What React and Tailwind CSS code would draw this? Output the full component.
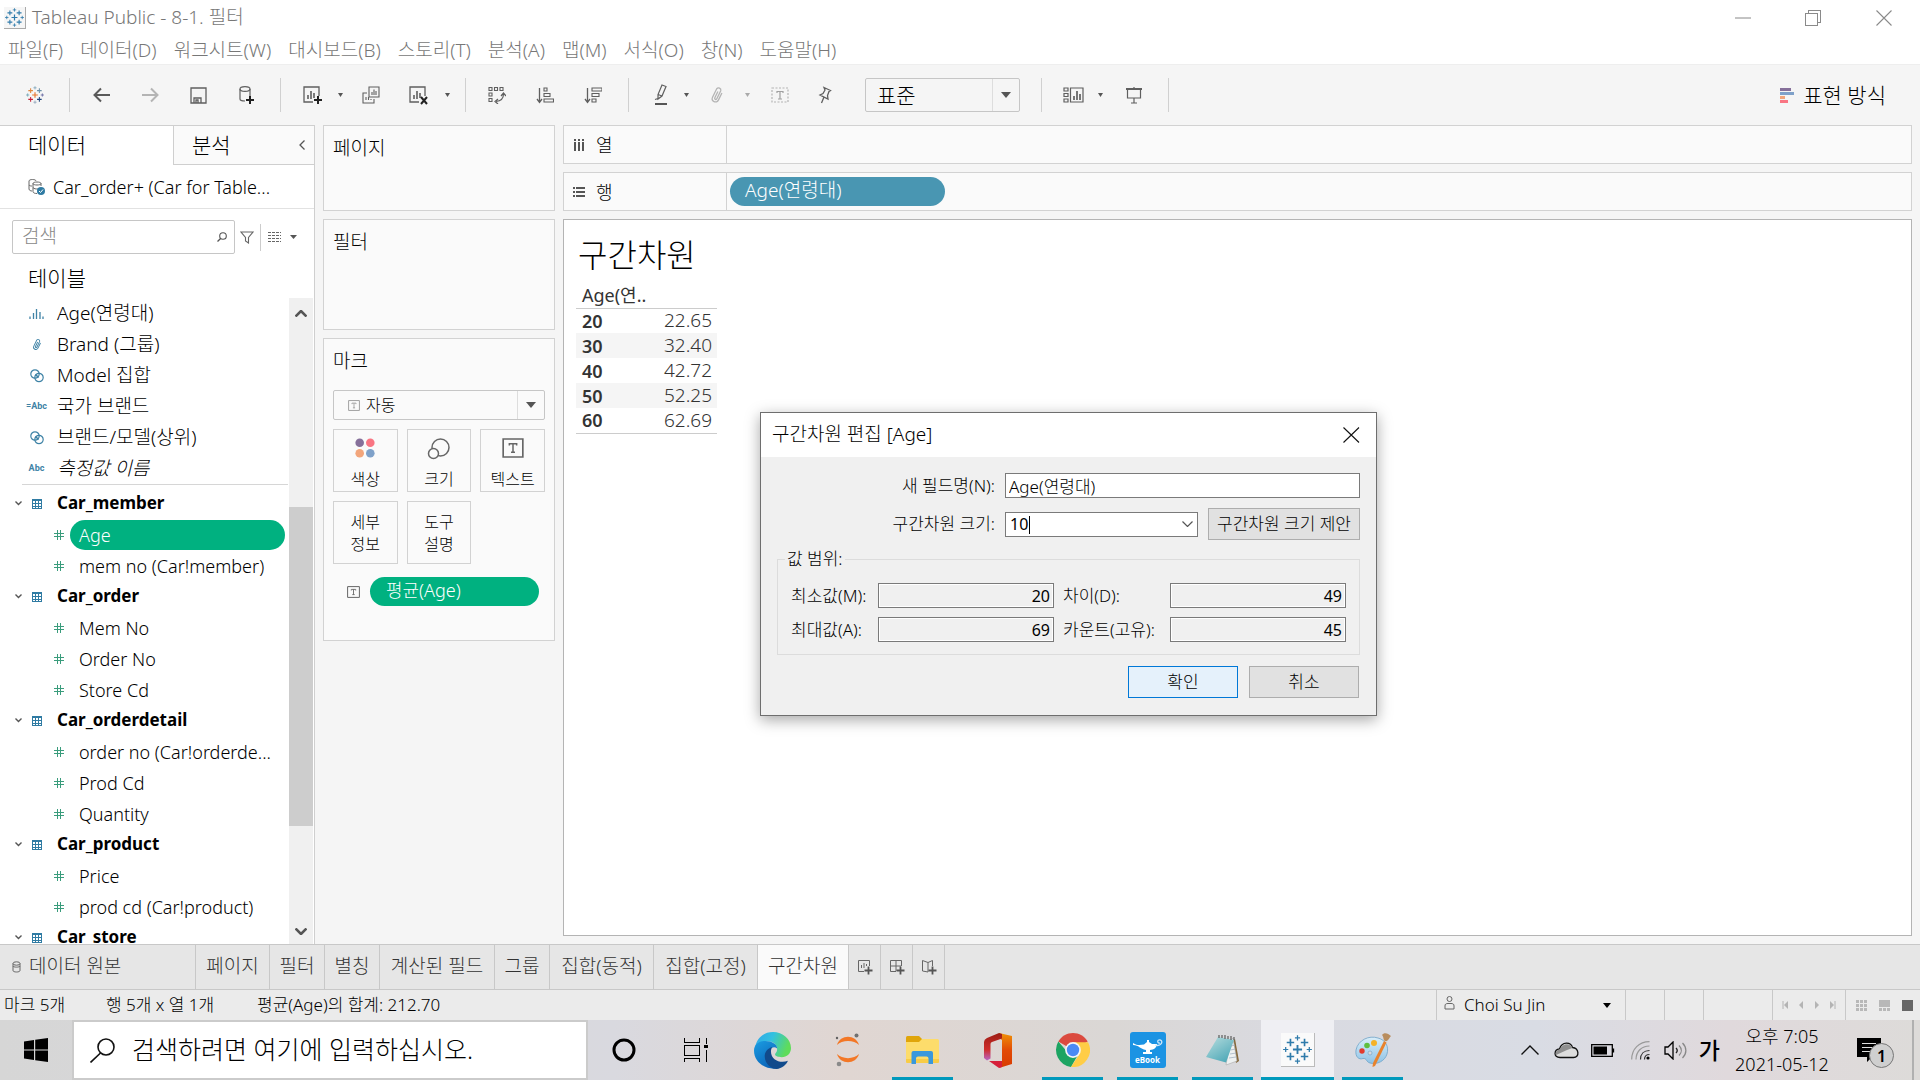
import React from "react";

const SANS = "font-['Noto_Sans','Noto_Sans_CJK_KR',sans-serif]";

/* ---------- small drawing helpers ---------- */

function Svg({ w, h, children, className = "", ...rest }) {
  return (
    <svg width={w} height={h} viewBox={`0 0 ${w} ${h}`} fill="none" className={`shrink-0 ${className}`} aria-hidden="true" {...rest}>
      {children}
    </svg>
  );
}

const cross = (x, y, a) => `M${x - a} ${y}H${x + a}M${x} ${y - a}V${y + a}`;

function TableauMark({ size, colors }) {
  const c = colors || Array(9).fill("#2f7bab");
  const pts = [
    [14, 14, 4.4, 1.8],
    [7.2, 7.2, 3.6, 1.6],
    [20.8, 7.2, 3.6, 1.6],
    [7.2, 20.8, 3.6, 1.6],
    [20.8, 20.8, 3.6, 1.6],
    [14, 2.8, 2.5, 1.2],
    [14, 25.2, 2.5, 1.2],
    [2.6, 14, 2.5, 1.2],
    [25.4, 14, 2.5, 1.2],
  ];
  return (
    <svg width={size} height={size} viewBox="0 0 28 28" aria-hidden="true" className="shrink-0">
      {pts.map(([x, y, a, s], i) => (
        <path key={i} d={cross(x, y, a)} stroke={c[i]} strokeWidth={s} />
      ))}
    </svg>
  );
}

function Caret({ color = "#555", w = 6, h = 4 }) {
  return (
    <Svg w={w} h={h}>
      <path d={`M0 0H${w}L${w / 2} ${h}Z`} fill={color} />
    </Svg>
  );
}

const G = "#5f5f5f";

const Back = () => (
  <Svg w={18} h={16}><path d="M17 8H2M8 1.5L1.5 8L8 14.5" stroke="#5a5a5a" strokeWidth="2" /></Svg>
);
const Forward = () => (
  <Svg w={18} h={16}><path d="M1 8H16M10 1.5L16.5 8L10 14.5" stroke="#b4b4b4" strokeWidth="2" /></Svg>
);
const Save = () => (
  <Svg w={17} h={17}>
    <path d="M1 1H16V16H1ZM4 16V11H11V16M6 16V13H8V16" stroke={G} strokeWidth="1.3" />
  </Svg>
);
const DbPlus = () => (
  <Svg w={18} h={20}>
    <path d="M13 11V4M3 4V14C3 15.5 5 16 8 16" stroke={G} strokeWidth="1.2" />
    <ellipse cx="8" cy="4" rx="5" ry="2.4" stroke={G} strokeWidth="1.2" />
    <path d="M13 11V19M9 15H17" stroke="#222" strokeWidth="2" />
  </Svg>
);
const Sheet = ({ mark }) => (
  <Svg w={21} h={20}>
    <path d="M11 17H2V2H17V11" stroke={G} strokeWidth="1.3" />
    <path d="M6 10V14M9 6V14M12 8V13" stroke={G} strokeWidth="1.6" />
    {mark === "x" ? (
      <path d="M13 12L19 19M19 12L13 19" stroke="#222" strokeWidth="2" />
    ) : (
      <path d="M16 11V19M12 15H20" stroke="#222" strokeWidth="2" />
    )}
  </Svg>
);
const Duplicate = () => (
  <Svg w={18} h={18}>
    <path d="M7 1H17V11H7ZM10 9V6M12 9V3.5M14 9V5" stroke={G} strokeWidth="1.1" />
    <path d="M5 7H1V17H12V13M4 14V11M6.500 14V11M9 14V13" stroke={G} strokeWidth="1.1" />
  </Svg>
);
const Swap = () => (
  <Svg w={18} h={18}>
    <path d="M1 1.500H4V4.500H1ZM6.500 1.500H9.500V4.500H6.500ZM12 1.500H15V4.500H12ZM1 7H4V10H1ZM1 12.500H4V15.500H1Z" stroke={G} strokeWidth="1.1" />
    <path d="M15.500 8C15.500 12 13 15 8 15.500M13 10L15.500 7L18 10M10 13L7 15.500L10 18" stroke={G} strokeWidth="1.2" />
  </Svg>
);
const Sort = ({ desc }) => (
  <Svg w={18} h={17}>
    <path d="M3.500 1V15M1 12L3.500 15.500L6 12" stroke={G} strokeWidth="1.3" />
    {desc ? (
      <path d="M8 1H18V4H8ZM8 6.500H15V9.500H8ZM8 12H12V15H8Z" stroke={G} strokeWidth="1.1" />
    ) : (
      <path d="M8 1H11V4H8ZM8 6.500H14V9.500H8ZM8 12H17.500V15H8Z" stroke={G} strokeWidth="1.1" />
    )}
  </Svg>
);
const Pen = () => (
  <Svg w={14} h={22}>
    <path d="M8 1L12 2.500L8 12L4 15L4 10.500ZM4 10.500L8 12M1 15.500L4 14.500" stroke={G} strokeWidth="1.2" />
    <path d="M1 20H13" stroke="#555" strokeWidth="2" />
  </Svg>
);
const Clip = ({ color = "#b4b4b4", w = 14, h = 18 }) => (
  <svg width={w} height={h} viewBox="0 0 14 18" fill="none" aria-hidden="true" className="shrink-0">
    <path transform="rotate(26 7 9)" d="M10.500 5V13A3.200 3.200 0 0 1 4 13V3.500A2.300 2.300 0 0 1 8.500 3.500V12.500A1.100 1.100 0 0 1 6.300 12.500V5.500" stroke={color} strokeWidth="1.300" />
  </svg>
);
const TextBoxIcon = () => (
  <Svg w={18} h={16}>
    <path d="M1 1H17V15H1Z" stroke="#b4b4b4" strokeWidth="1.2" strokeDasharray="2 1.500" />
    <path d="M6 6V4.500H12V6M9 4.500V12M7 12H11" stroke="#a0a0a0" strokeWidth="1.200" />
  </Svg>
);
const Pin = () => (
  <Svg w={14} h={18}>
    <path d="M6 1.500L12.500 4.500L11 5.500L9.500 9.500L10 13L2 9L5 7.500L7 4ZM6 11L3.500 17" stroke={G} strokeWidth="1.300" />
  </Svg>
);
const CardsIcon = () => (
  <Svg w={21} h={16}>
    <path d="M1 1H5V4H1ZM1 6.500H5V9.500H1ZM1 12H5V15H1ZM7.500 1H20V15H7.500Z" stroke={G} strokeWidth="1.2" />
    <path d="M11 9V13M14 4V13M17 7V13" stroke={G} strokeWidth="1.700" />
  </Svg>
);
const Present = () => (
  <Svg w={18} h={17}>
    <path d="M1 2H17" stroke={G} strokeWidth="2" />
    <path d="M2.500 2V11H15.500V2M9 0V2M9 11V16M6 16H12" stroke={G} strokeWidth="1.200" />
  </Svg>
);

/* field icons */
const BLUE = "#3f83a6";
const BinsIcon = () => (
  <Svg w={15} h={10}><path d="M1 10V7.500M4.500 10V4M7.500 10V0M11 10V3M14 10V7.500" stroke={BLUE} strokeWidth="1.300" /></Svg>
);
const SetIcon = () => (
  <Svg w={14} h={14}><circle cx="5" cy="5" r="4.200" stroke={BLUE} strokeWidth="1.200" /><circle cx="9" cy="8.500" r="4.200" stroke={BLUE} strokeWidth="1.200" /><path d="M5.500 5.500L8.500 8.500" stroke={BLUE} strokeWidth="1.600" /></Svg>
);
const AbcIcon = ({ eq }) => (
  <span className="text-[9px] leading-none font-bold text-[#3f83a6] font-['Roboto',sans-serif]">{eq ? "=Abc" : "Abc"}</span>
);
const Hash = () => (
  <Svg w={10} h={10} shapeRendering="crispEdges"><path d="M3.500 0V10M6.500 0V10M0 3.500H10M0 6.500H10" stroke="#3a9c7c" /></Svg>
);
const TableIcon = () => (
  <Svg w={10} h={10} shapeRendering="crispEdges">
    <path d="M0.500 0.500H9.500V9.500H0.500ZM0 1.500H10M0 4.500H10M0 7.500H10M3.500 1V9M6.500 1V9" stroke="#2f7ba3" />
  </Svg>
);
const Chevron = ({ dir = "down", w = 8, color = "#555", sw = 1.4 }) => {
  const h = w / 2 + 1;
  return (
    <Svg w={w} h={h}>
      <path d={dir === "down" ? `M0.500 0.500L${w / 2} ${h - 1}L${w - 0.5} 0.500` : `M0.500 ${h - 0.5}L${w / 2} 1L${w - 0.5} ${h - 0.5}`} stroke={color} strokeWidth={sw} />
    </Svg>
  );
};
const TIcon = ({ w = 13, h = 12, color = "#666" }) => (
  <svg width={w} height={h} viewBox="0 0 13 12" fill="none" aria-hidden="true" className="shrink-0">
    <path d="M0.600 0.600H12.400V11.400H0.600Z" stroke={color} strokeWidth="1" />
    <path d="M4.300 4.500V3.400H8.700V4.500M6.500 3.400V8.600M5.300 8.600H7.700" stroke={color} strokeWidth="0.900" />
  </svg>
);

/* ---------- title and menu ---------- */

function TitleBar() {
  return (
    <header className="flex h-9 shrink-0 items-center bg-white pl-1">
      <span className="flex size-[22px] items-center justify-center border-r border-b border-[#aaa] bg-[#f6f6f6]">
        <TableauMark size={19} />
      </span>
      <h1 className="ml-[6px] text-[19px] font-light text-[#777]">Tableau Public - 8-1. 필터</h1>
      <div className="ml-auto flex h-8">
        <button aria-label="최소화" className="flex w-[70px] items-center justify-center"><Svg w={16} h={2}><path d="M0 1H16" stroke="#888" /></Svg></button>
        <button aria-label="이전 크기로" className="flex w-[70px] items-center justify-center">
          <Svg w={16} h={16} shapeRendering="crispEdges"><path d="M0.500 3.500H12.500V15.500H0.500ZM3.500 3V0.500H15.500V12.500H13" stroke="#8a8a8a" /></Svg>
        </button>
        <button aria-label="닫기" className="flex w-[72px] items-center justify-center"><Svg w={16} h={16}><path d="M0.500 0.500L15.500 15.500M15.500 0.500L0.500 15.500" stroke="#8a8a8a" strokeWidth="1.100" /></Svg></button>
      </div>
    </header>
  );
}

const MENU = ["파일(F)", "데이터(D)", "워크시트(W)", "대시보드(B)", "스토리(T)", "분석(A)", "맵(M)", "서식(O)", "창(N)", "도움말(H)"];

function MenuBar() {
  return (
    <nav className="flex h-7 shrink-0 items-center gap-[17px] bg-white pl-2 text-[19px] leading-6 font-light text-[#777]">
      {MENU.map((m) => (
        <button key={m} className="whitespace-nowrap">{m}</button>
      ))}
    </nav>
  );
}

/* ---------- toolbar ---------- */

const Tool = ({ label, w, children }) => (
  <button aria-label={label} className={`flex h-8 shrink-0 items-center justify-center ${w}`}>{children}</button>
);
const Group = ({ children, className }) => (
  <div className={`flex h-[34px] shrink-0 items-center border-r border-[#d0d0d0] ${className}`}>{children}</div>
);

function Toolbar() {
  const logo = ["#e8762d", "#e0883e", "#6a8fa6", "#c72037", "#1f457e", "#7ba3b8", "#8aa0b8", "#6a9fb0", "#5b5f9c"];
  return (
    <div className="flex h-[61px] shrink-0 items-center border-t border-[#eee] bg-[#f5f5f5]">
      <Group className="w-[70px] justify-center"><Tool label="시작 페이지" w="w-12"><TableauMark size={18} colors={logo} /></Tool></Group>
      <Group className="pr-[10px] pl-2">
        <Tool label="뒤로" w="w-12"><Back /></Tool>
        <Tool label="앞으로" w="w-12"><Forward /></Tool>
        <Tool label="저장" w="w-12"><Save /></Tool>
        <Tool label="새 데이터 원본" w="w-12"><DbPlus /></Tool>
      </Group>
      <Group className="pr-3 pl-[10px]">
        <Tool label="새 워크시트" w="w-[42px]"><Sheet /></Tool>
        <Tool label="새 워크시트 옵션" w="w-[14px]"><Caret w={5} h={4} /></Tool>
        <Tool label="복제" w="w-12"><Duplicate /></Tool>
        <Tool label="시트 지우기" w="w-[46px]"><Sheet mark="x" /></Tool>
        <Tool label="시트 지우기 옵션" w="w-3"><Caret w={5} h={4} /></Tool>
      </Group>
      <Group className="pr-[11px] pl-[7px]">
        <Tool label="행과 열 바꾸기" w="w-12"><Swap /></Tool>
        <Tool label="오름차순 정렬" w="w-12"><Sort /></Tool>
        <Tool label="내림차순 정렬" w="w-12"><Sort desc /></Tool>
      </Group>
      <Group className="pr-[21px] pl-[11px]">
        <Tool label="하이라이트" w="w-[42px]"><Pen /></Tool>
        <Tool label="하이라이트 옵션" w="w-2"><Caret w={5} h={4} /></Tool>
        <Tool label="멤버 그룹화" w="w-[53px]"><Clip /></Tool>
        <Tool label="그룹화 옵션" w="w-2"><Caret w={5} h={4} color="#aaa" /></Tool>
        <Tool label="마크 레이블 표시" w="w-[58px]"><TextBoxIcon /></Tool>
        <Tool label="축 고정" w="w-8"><Pin /></Tool>
        <div className="relative ml-6 flex h-[34px] w-[155px] items-center rounded-[2px] border border-[#c6c6c6]">
          <select aria-label="맞춤" className="h-full w-full appearance-none bg-transparent pl-[11px] text-[21px] leading-none font-light text-black outline-none">
            <option>표준</option>
          </select>
          <span className="pointer-events-none absolute inset-y-0 right-0 flex w-[27px] items-center justify-center border-l border-[#ddd]"><Caret w={10} h={6} /></span>
        </div>
      </Group>
      <Group className="pr-1 pl-2">
        <Tool label="카드 표시" w="w-[46px]"><CardsIcon /></Tool>
        <Tool label="카드 옵션" w="w-2"><Caret w={5} h={4} /></Tool>
        <Tool label="프레젠테이션 모드" w="w-[60px]"><Present /></Tool>
      </Group>
      <button className="mr-[34px] ml-auto flex items-center gap-2 text-[21px] font-light whitespace-nowrap text-black">
        <Svg w={15} h={15} shapeRendering="crispEdges">
          <path d="M0 0H11V3H0Z" fill="#86709a" /><path d="M0 4H14V7H0Z" fill="#7fa1c9" /><path d="M0 8H5V11H0Z" fill="#f2a57b" /><path d="M0 12H8V15H0Z" fill="#f97583" />
        </Svg>
        표현 방식
      </button>
    </div>
  );
}

/* ---------- data pane ---------- */

const TOP_FIELDS = [
  { name: "Age(연령대)", icon: <BinsIcon /> },
  { name: "Brand (그룹)", icon: <Clip color={BLUE} w={10} h={13} /> },
  { name: "Model 집합", icon: <SetIcon /> },
  { name: "국가 브랜드", icon: <AbcIcon eq /> },
  { name: "브랜드/모델(상위)", icon: <SetIcon /> },
  { name: "측정값 이름", icon: <AbcIcon />, italic: true },
];

const TABLES = [
  { name: "Car_member", fields: ["Age", "mem no (Car!member)"] },
  { name: "Car_order", fields: ["Mem No", "Order No", "Store Cd"] },
  { name: "Car_orderdetail", fields: ["order no (Car!orderde...", "Prod Cd", "Quantity"] },
  { name: "Car_product", fields: ["Price", "prod cd (Car!product)"] },
  { name: "Car_store", fields: [] },
];

function DataPane() {
  return (
    <aside className="flex w-[315px] shrink-0 flex-col border-t border-r border-[#cfcfcf] bg-white">
      <div className="flex h-[39px] shrink-0 text-[21px] font-light text-black">
        <button className="w-[173px] pl-7 text-left">데이터</button>
        <div className="flex flex-1 items-center justify-between border-b border-l border-[#cfcfcf] bg-[#fafafa] pr-[9px] pl-[18px]">
          <button>분석</button>
          <button aria-label="창 접기"><Svg w={6} h={10}><path d="M5.500 0.500L1 5L5.500 9.500" stroke="#555" strokeWidth="1.300" /></Svg></button>
        </div>
      </div>
      <button className="flex h-11 shrink-0 items-center border-b border-[#e2e2e2] pl-7 text-left text-lg font-light whitespace-nowrap text-black">
        <Svg w={17} h={17}>
          <path d="M1 3V11C1 12.500 3 13 4 13M1 3C1 1 8 1 8 3M5 5.500V13.500C5 15 7 15.500 9 15.500M5 5.500C5 3.500 13 3.500 13 5.500V8M5 5.500C5 7.500 13 7.500 13 5.500M5 9.500C6 11 8 11 10 11M1 7C2 8 3 8 4 8" stroke="#666" />
          <circle cx="13" cy="13" r="4" fill="#2f7ba3" /><path d="M11 13L12.500 14.500L15 11.500" stroke="#fff" />
        </Svg>
        <span className="ml-2">Car_order+ (Car for Table...</span>
      </button>
      <div className="mt-[11px] flex h-[34px] shrink-0 items-center pl-3">
        <label className="flex h-full w-[223px] items-center rounded-[2px] border border-[#c6c6c6] pr-[7px]">
          <input aria-label="검색" placeholder="검색" className="min-w-0 flex-1 pl-[9px] text-[19px] font-light text-[#333] outline-none placeholder:text-[#888]" />
          <Svg w={10} h={10}><circle cx="6" cy="4" r="3.300" stroke="#555" strokeWidth="1.100" /><path d="M3.600 6.500L0.500 9.500" stroke="#555" strokeWidth="1.300" /></Svg>
        </label>
        <button aria-label="필터" className="ml-[5px]"><Svg w={14} h={13}><path d="M1 1H13L8.500 6.500V12L5.500 10V6.500Z" stroke="#666" strokeWidth="1.100" /></Svg></button>
        <span className="ml-[6px] h-[27px] w-px bg-[#ccc]" />
        <button aria-label="보기 옵션" className="ml-[7px] flex items-center gap-[9px]">
          <Svg w={13} h={10} shapeRendering="crispEdges"><path d="M0 0.500H13M0 3.500H13M0 6.500H13M0 9.500H13" stroke="#666" strokeDasharray="3 1" /></Svg>
          <Caret w={7} h={4} />
        </button>
      </div>
      <h2 className="flex h-11 shrink-0 items-center pt-1 pl-7 text-[21px] font-light text-black">테이블</h2>
      <div className="flex min-h-0 flex-1">
        <div className="min-w-0 flex-1 overflow-hidden text-lg whitespace-nowrap">
          <ul className="text-[19px] font-light text-black">
            {TOP_FIELDS.map((f) => (
              <li key={f.name} className="flex h-[31px] items-center">
                <span className="flex w-[57px] shrink-0 items-center justify-center pl-4">{f.icon}</span>
                <span className={f.italic ? "italic" : ""}>{f.name}</span>
              </li>
            ))}
          </ul>
          <hr className="ml-[22px] mr-px mb-[3px] border-[#d6d6d6]" />
          {TABLES.map((t) => (
            <section key={t.name}>
              <h3 className="flex h-[31px] items-center text-[17px] font-bold text-black">
                <button aria-label={`${t.name} 접기`} className="ml-[10px] flex w-[17px] justify-center"><Chevron w={7} /></button>
                <span className="ml-[5px] flex w-[25px]"><TableIcon /></span>
                {t.name}
              </h3>
              <ul className="font-light text-black">
                {t.fields.map((f) => (
                  <li key={f} className="flex h-[31px] items-center pl-[54px]">
                    <Hash />
                    <span className={f === "Age" ? "ml-[6px] mr-1 h-[30px] flex-1 rounded-full bg-[#00b180] pl-[9px] leading-[31px] text-white" : "ml-[15px]"}>{f}</span>
                  </li>
                ))}
              </ul>
            </section>
          ))}
        </div>
        <div className="mr-px flex w-6 shrink-0 flex-col items-center bg-[#f0f0f0]">
          <button aria-label="위로 스크롤" className="flex h-[30px] items-center"><Chevron dir="up" w={12} sw={2.6} /></button>
          <div className="grow-[179]" />
          <div className="w-full grow-[319] bg-[#cdcdcd]" />
          <div className="grow-[92]" />
          <button aria-label="아래로 스크롤" className="flex h-[26px] items-center"><Chevron w={12} sw={2.6} /></button>
        </div>
      </div>
    </aside>
  );
}

/* ---------- cards ---------- */

const Card = ({ title, className, children }) => (
  <section className={`border border-[#d2d2d2] bg-[#fafafa] ${className}`}>
    <h2 className="px-[9px] pt-2 text-[19px] leading-7 font-light text-black">{title}</h2>
    {children}
  </section>
);

const MarkButton = ({ label, icon }) => (
  <button className={`flex h-[63px] flex-col items-center border border-[#d2d2d2] bg-[#fafafa] text-base leading-[22px] font-light text-black ${icon ? "justify-between pt-2 pb-px" : "justify-center"}`}>
    {icon}
    <span className="whitespace-pre-line">{label}</span>
  </button>
);

function Cards() {
  return (
    <div className="ml-2 flex w-[232px] shrink-0 flex-col gap-2">
      <Card title="페이지" className="h-[86px]" />
      <Card title="필터" className="h-[111px]" />
      <Card title="마크" className="h-[303px]">
        <div className="px-[9px] pt-[15px]">
          <div className="relative flex h-[30px] items-center rounded-[2px] border border-[#c6c6c6]">
            <span className="pointer-events-none absolute left-[14px]"><TIcon w={12} h={11} color="#999" /></span>
            <select aria-label="마크 유형" className="h-full w-full appearance-none bg-transparent pl-8 text-base leading-none font-light text-black outline-none">
              <option>자동</option>
            </select>
            <span className="pointer-events-none absolute inset-y-0 right-0 flex w-[27px] items-center justify-center border-l border-[#ddd]"><Caret w={10} h={6} /></span>
          </div>
          <div className="mt-[9px] grid grid-cols-3 gap-[9px]">
            <MarkButton label="색상" icon={<Svg w={20} h={20}><circle cx="4.700" cy="4.700" r="4.300" fill="#86709a" /><circle cx="15.300" cy="4.700" r="4.300" fill="#f97583" /><circle cx="4.700" cy="15.300" r="4.300" fill="#f2a57b" /><circle cx="15.300" cy="15.300" r="4.300" fill="#7fa1c9" /></Svg>} />
            <MarkButton label="크기" icon={<Svg w={24} h={22}><circle cx="13.500" cy="9.500" r="8.500" stroke="#666" strokeWidth="1.500" /><circle cx="6.500" cy="15.500" r="5" fill="#fafafa" stroke="#666" strokeWidth="1.500" /></Svg>} />
            <MarkButton label="텍스트" icon={<TIcon w={22} h={20} />} />
            <MarkButton label={"세부\n정보"} />
            <MarkButton label={"도구\n설명"} />
          </div>
          <div className="mt-[13px] flex items-center pr-[6px] pl-[14px]">
            <TIcon />
            <button className="ml-[10px] h-[29px] flex-1 rounded-full bg-[#00b180] pb-[3px] pl-4 text-left text-lg leading-[26px] font-light text-white">평균(Age)</button>
          </div>
        </div>
      </Card>
    </div>
  );
}

/* ---------- view ---------- */

function Shelf({ icon, label, children }) {
  return (
    <div className="flex h-[39px] shrink-0 border border-[#d2d2d2] bg-[#fafafa]">
      <div className="flex w-[163px] shrink-0 items-center gap-[11px] border-r border-[#d2d2d2] pl-[9px] text-lg font-light text-black">{icon}{label}</div>
      <div className="flex flex-1 items-center pl-[3px]">{children}</div>
    </div>
  );
}

const ROWS = [["20", "22.65"], ["30", "32.40"], ["40", "42.72"], ["50", "52.25"], ["60", "62.69"]];

function View() {
  return (
    <main className="mr-2 ml-2 flex min-w-0 flex-1 flex-col gap-2">
      <Shelf label="열" icon={<Svg w={12} h={12} shapeRendering="crispEdges"><path d="M2 0V2M6 0V2M10 0V2M2 3V12M6 3V12M10 3V12" stroke="#555" strokeWidth="2" /></Svg>} />
      <Shelf label="행" icon={<Svg w={12} h={10} shapeRendering="crispEdges"><path d="M0 1H2M0 5H2M0 9H2M3 1H12M3 5H12M3 9H12" stroke="#555" strokeWidth="2" /></Svg>}>
        <button className="h-[29px] w-[215px] rounded-full bg-[#4996b2] pb-[3px] pl-[15px] text-left text-[19px] leading-[26px] font-light text-white">Age(연령대)</button>
      </Shelf>
      <div className="relative mb-2 flex-1 border border-[#b4b4b4] bg-white">
        <h2 className="pt-[14px] pl-[14px] text-[32px] leading-[41px] font-light text-black">구간차원</h2>
        <table className="mt-2 ml-3 w-[141px] border-b border-[#ccc] text-lg leading-none text-[#333]">
          <thead>
            <tr className="h-[25px] border-b border-[#ccc]"><th colSpan={2} className="pl-[6px] text-left text-lg leading-none font-normal">Age(연..</th></tr>
          </thead>
          <tbody>
            {ROWS.map(([a, b]) => (
              <tr key={a} className="h-[25px] even:bg-[#f5f5f5]">
                <th scope="row" className="pl-[6px] text-left font-semibold">{a}</th>
                <td className="pr-[5px] text-right text-[19px] leading-none font-light text-[#333]">{b}</td>
              </tr>
            ))}
          </tbody>
        </table>
        <Dialog />
      </div>
    </main>
  );
}

/* ---------- dialog ---------- */

const Stat = ({ id, label, value, pad }) => (
  <>
    <label htmlFor={id} className={`whitespace-nowrap ${pad ? "pl-[9px]" : ""}`}>{label}</label>
    <input id={id} readOnly value={value} className="h-[25px] w-full min-w-0 border border-[#7a7a7a] bg-[#f0f0f0] pr-[3px] text-right text-base font-normal shadow-[inset_0_0_0_1px_#fff] outline-none" />
  </>
);

function Dialog() {
  return (
    <div role="dialog" aria-labelledby="dlg-title" className="absolute top-[192px] left-[196px] w-[617px] border border-[#6e6e6e] bg-[#f0f0f0] text-[17px] font-light text-black shadow-[0_4px_14px_rgba(0,0,0,0.35)]">
      <div className="flex h-[44px] items-center justify-between bg-white pr-4 pl-[11px]">
        <h2 id="dlg-title" className="text-[19px]">구간차원 편집 [Age]</h2>
        <button aria-label="닫기"><Svg w={17} h={16}><path d="M0.500 0.500L16 15.500M16 0.500L0.500 15.500" stroke="#111" strokeWidth="1.100" /></Svg></button>
      </div>
      <div className="p-4 pb-[17px]">
        <div className="grid grid-cols-[218px_minmax(0,1fr)_152px] items-center gap-[10px]">
          <label htmlFor="fname" className="text-right">새 필드명(N):</label>
          <input id="fname" defaultValue="Age(연령대)" className="col-span-2 h-[25px] w-full border border-[#7a7a7a] bg-white px-[3px] text-[17px] outline-none" />
          <label htmlFor="fsize" className="text-right">구간차원 크기:</label>
          <div className="relative flex h-[25px] items-center border border-[#7a7a7a] bg-white pr-1">
            <input id="fsize" defaultValue="10" className="min-w-0 flex-1 pl-1 text-base font-normal outline-none" />
            <span className="absolute top-[3px] left-[23px] h-[18px] w-px bg-black" />
            <button aria-label="목록 열기"><Chevron w={11} sw={1.200} /></button>
          </div>
          <button className="h-8 border border-[#adadad] bg-[#e1e1e1] whitespace-nowrap">구간차원 크기 제안</button>
        </div>
        <fieldset className="mt-2 h-[107px] border border-[#dcdcdc] px-[13px]">
          <legend className="-ml-[6px] px-[2px] leading-[22px]">값 범위:</legend>
          <div className="mt-[13px] grid grid-cols-[87px_1fr_116px_1fr] items-center gap-y-[9px] leading-[22px]">
            <Stat id="s1" label="최소값(M):" value="20" />
            <Stat id="s2" label="차이(D):" value="49" pad />
            <Stat id="s3" label="최대값(A):" value="69" />
            <Stat id="s4" label="카운트(고유):" value="45" pad />
          </div>
        </fieldset>
        <div className="mt-[11px] mr-px flex justify-end gap-[11px]">
          <button className="h-8 w-[110px] border border-[#0078d7] bg-[#e5f1fb]">확인</button>
          <button className="h-8 w-[110px] border border-[#adadad] bg-[#e1e1e1]">취소</button>
        </div>
      </div>
    </div>
  );
}

/* ---------- sheet tabs and status ---------- */

const TABS = [
  ["페이지", "w-[74px]"], ["필터", "w-[55px]"], ["별칭", "w-[55px]"], ["계산된 필드", "w-[115px]"], ["그룹", "w-[55px]"],
  ["집합(동적)", "w-[104px]"], ["집합(고정)", "w-[104px]"], ["구간차원", "w-[91px]"],
];

const NewTab = ({ label, children }) => (
  <button aria-label={label} className="flex w-8 items-center justify-center border-r border-[#c8c8c8]">
    <Svg w={16} h={16}>{children}<path d="M11.500 7.500V15.500M7.500 11.500H15.500" stroke="#555" strokeWidth="1.800" /></Svg>
  </button>
);

function SheetTabs() {
  return (
    <div className="flex h-[46px] shrink-0 border-y border-[#c8c8c8] bg-[#e6e6e6] text-[19px] font-light text-[#333]">
      <button className="flex w-[196px] items-center gap-2 border-r border-[#c8c8c8] pl-3">
        <Svg w={9} h={12}><path d="M1 2.500V9.500C1 11.500 8 11.500 8 9.500V2.500M1 5C1 6.500 8 6.500 8 5" stroke="#666" /><ellipse cx="4.500" cy="2.500" rx="3.500" ry="1.700" stroke="#666" /></Svg>
        데이터 원본
      </button>
      {TABS.map(([t, w]) => (
        <button key={t} className={`border-r border-[#c8c8c8] whitespace-nowrap ${w} ${t === "구간차원" ? "bg-[#fafafa]" : ""}`}>{t}</button>
      ))}
      <NewTab label="새 워크시트"><path d="M7 12.500H1.500V1.500H12.500V7M4.500 9V6M7 9V4M9.500 7V5" stroke="#666" /></NewTab>
      <NewTab label="새 대시보드"><path d="M7 12.500H1.500V1.500H12.500V7M7 1V12M1 7H12" stroke="#666" /></NewTab>
      <NewTab label="새 스토리"><path d="M7 3.500V13L1.500 12V1.500L7 3.500L11.500 1.500V7" stroke="#666" /></NewTab>
    </div>
  );
}

function StatusBar() {
  return (
    <footer className="flex h-[30px] shrink-0 items-center bg-[#ebebeb] text-[17px] leading-[26px] font-light whitespace-nowrap text-black">
      <span className="w-[102px] pl-1">마크 5개</span>
      <span className="w-[151px] pl-1">행 5개 x 열 1개</span>
      <span className="pl-1">평균(Age)의 합계: 212.70</span>
      <div className="ml-auto flex h-full">
        <button className="flex w-[190px] items-center border-x border-[#c8c8c8] pl-[7px]">
          <Svg w={11} h={14} className="-mt-1"><circle cx="5.500" cy="3" r="2.500" stroke="#666" /><path d="M1 13V10C1 8 2 7.500 4 7.500H7C9 7.500 10 8 10 10V13Z" stroke="#666" /></Svg>
          <span className="ml-[9px]">Choi Su Jin</span>
          <span className="mr-[14px] ml-auto"><Caret w={8} h={5} color="#000" /></span>
        </button>
        <span className="w-[39px] border-r border-[#c8c8c8]" />
        <span className="w-[39px] border-r border-[#c8c8c8]" />
        <span className="w-[69px] border-r border-[#c8c8c8]" />
        <span className="flex w-[73px] items-center justify-center gap-[10px] border-r border-[#c8c8c8]">
          <button aria-label="처음"><Svg w={7} h={8}><path d="M1 0V8" stroke="#b4b4b4" /><path d="M6 0V8L2 4Z" fill="#b4b4b4" /></Svg></button>
          <button aria-label="이전"><Svg w={5} h={8}><path d="M4 0V8L0 4Z" fill="#b4b4b4" /></Svg></button>
          <button aria-label="다음"><Svg w={5} h={8}><path d="M1 0V8L5 4Z" fill="#b4b4b4" /></Svg></button>
          <button aria-label="마지막"><Svg w={7} h={8}><path d="M6 0V8" stroke="#b4b4b4" /><path d="M1 0V8L5 4Z" fill="#b4b4b4" /></Svg></button>
        </span>
        <span className="flex items-center gap-3 pr-[7px] pl-[10px]">
          <button aria-label="시트 정렬기"><Svg w={11} h={11} shapeRendering="crispEdges"><path d="M0 1.500H11M0 5.500H11M0 9.500H11" stroke="#b8b8b8" strokeWidth="3" strokeDasharray="3 1" /></Svg></button>
          <button aria-label="필름스트립"><Svg w={11} h={11} shapeRendering="crispEdges"><path d="M0 0H11V7H0Z" fill="#b8b8b8" /><path d="M0 9.500H11" stroke="#b8b8b8" strokeWidth="3" strokeDasharray="3 1" /></Svg></button>
          <button aria-label="탭 보기" className="size-[11px] bg-[#666]" />
        </span>
      </div>
    </footer>
  );
}

/* ---------- taskbar ---------- */

const Edge = () => (
  <svg width="37" height="37" viewBox="0 0 36 36" aria-hidden="true">
    <defs>
      <linearGradient id="eg1" x1="0" y1="0" x2="1" y2="0.300"><stop offset="0" stopColor="#2fa6e8" /><stop offset="0.500" stopColor="#33c1e0" /><stop offset="1" stopColor="#5fdc5a" /></linearGradient>
      <linearGradient id="eg2" x1="0" y1="0" x2="0.600" y2="1"><stop offset="0" stopColor="#1b9de2" /><stop offset="1" stopColor="#0a63b8" /></linearGradient>
    </defs>
    <path d="M1 15C3 5 10 0 18.500 0C28 0 36 7 36 15.500C36 21 32 24.500 27 24.500C23 24.500 20.500 23.500 20.500 22C20.500 20.500 22.500 20 22.500 16.500C22.500 12 18 8.500 12 9C6 9.500 2.500 13 1 15Z" fill="url(#eg1)" />
    <path d="M0 18C0 12 5 8.700 11 8.700C17.500 8.700 22.500 12 22.500 16C19 13 14 16 14 22C14 29 19 35 24 35C14 38 0 31 0 18Z" fill="url(#eg2)" />
    <path d="M18 14.500C13 15.500 10 20 10.500 24.500C11 31 17 36 22 36C27 35.500 31.500 32 33 28C26 31 16.500 27.500 16.500 19C16.500 17 17 15.500 18 14.500Z" fill="#114a8b" />
  </svg>
);
const Jupyter = () => (
  <svg width="28" height="34" viewBox="0 0 28 34" aria-hidden="true">
    <path d="M3 12C6 1 22 1 25 12C20 6.500 8 6.500 3 12Z" fill="#f37726" /><path d="M3 21C6 32 22 32 25 21C20 26.500 8 26.500 3 21Z" fill="#f37726" />
    <circle cx="22.500" cy="2.500" r="2" fill="#707070" /><circle cx="3" cy="5" r="1.200" fill="#616161" /><circle cx="5" cy="31" r="2.300" fill="#8a8a8a" />
  </svg>
);
const Folder = () => (
  <svg width="33" height="28" viewBox="0 0 33 28" aria-hidden="true">
    <path d="M0 1.500Q0 0 1.500 0H13L16 3V8H0Z" fill="#e0a50a" /><path d="M0 6H13L16 3H31.500Q33 3 33 4.500V25.500Q33 27 31.500 27H1.500Q0 27 0 25.500Z" fill="#fddc6b" />
    <path d="M0 23H33V25.500Q33 27 31.500 27H1.500Q0 27 0 25.500Z" fill="#f8cc45" />
    <path d="M5.500 17Q5.500 15 7.500 15H25Q27 15 27 17V28H22.500V22.500Q22.500 20.500 20.500 20.500H12Q10 20.500 10 22.500V28H5.500Z" fill="#3a98dc" />
  </svg>
);
const Office = () => (
  <svg width="28" height="35" viewBox="0 0 28 35" aria-hidden="true">
    <defs><linearGradient id="of" x1="0" y1="0" x2="0" y2="1"><stop offset="0" stopColor="#ef9208" /><stop offset="0.500" stopColor="#e24a05" /><stop offset="1" stopColor="#d83b01" /></linearGradient>
      <linearGradient id="of2" x1="0" y1="0" x2="0" y2="1"><stop offset="0" stopColor="#9c1d14" /><stop offset="0.600" stopColor="#cf2d2a" /><stop offset="1" stopColor="#b867c8" /></linearGradient></defs>
    <path d="M15 0L28 3V31L15 35L18 31V7L15 5Z" fill="url(#of)" /><path d="M15 0L3 5Q0 6.500 0 9V25L3 27.500L6.500 25.500V11Q6.500 9.500 8 9L18 5.500V1Z" fill="url(#of2)" /><path d="M5 28H18V34L15 35Z" fill="#d6203a" />
  </svg>
);
const Chrome = () => (
  <svg width="34" height="34" viewBox="0 0 34 34" aria-hidden="true">
    <path d="M17 17L2.300 8.500A17 17 0 0 1 31.700 8.500Z" fill="#db4a3f" /><path d="M17 17H9.600L2.300 8.500A17 17 0 0 0 15 33.900L23 20Z" fill="#1da462" /><path d="M17 9.300H32.100A17 17 0 0 1 15 33.900L23.600 20.800Z" fill="#ffcd46" />
    <circle cx="17" cy="17" r="7.900" fill="#f5f5f5" /><circle cx="17" cy="17" r="6.200" fill="#4a8af4" />
  </svg>
);
const EBook = () => (
  <span className="flex h-9 w-9 flex-col items-center justify-center rounded-[3px] bg-[#1b93e3] pt-1">
    <Svg w={32} h={16}>
      <path d="M1 4C6 7 8 6 12 5.500L15 3V1H17V3L20 5H25C25 8 22 11 18 11V13H20V15H11V13H14V11C8 10 7 6 1 6Z" fill="#fff" />
      <path d="M23 6C29 8 32 2 28 0.800C25 0.500 25 4.500 28 4" stroke="#cfe8fa" strokeWidth="1.300" />
    </Svg>
    <span className="text-[8px] leading-[10px] font-bold text-white">eBook</span>
  </span>
);
const Notepad = () => (
  <svg width="34" height="34" viewBox="0 0 34 34" aria-hidden="true">
    <defs><linearGradient id="np" x1="0" y1="0" x2="0.700" y2="1"><stop offset="0" stopColor="#b9dedf" /><stop offset="1" stopColor="#4fa9b8" /></linearGradient></defs>
    <path d="M29 6L33 28L30 30L26 8Z" fill="#85683a" /><path d="M27 5L31 28L20 32L24 8Z" fill="#eef1f1" stroke="#aaa" strokeWidth="0.600" /><path d="M12 4L28 7L20 29.500L0 24Z" fill="url(#np)" />
    <path d="M13 2V5M16 2V5M19 2V6M22 3V6M25 3V7M28 4V7" stroke="#666" strokeWidth="1.300" />
    <path d="M25 13L29 12M24.500 17L29.500 16M24 21L30 20M23 25L30 24" stroke="#9ab" strokeWidth="0.700" />
  </svg>
);
const Paint = () => (
  <svg width="36" height="36" viewBox="0 0 36 36" aria-hidden="true">
    <defs><linearGradient id="pt" x1="0" y1="0" x2="0" y2="1"><stop offset="0" stopColor="#d9eef9" /><stop offset="1" stopColor="#8fc3e6" /></linearGradient></defs>
    <path d="M1 18C3 8 14 3 23 6C31 8 34 15 32 22C30 29 22 33 15 31C11 30 12 26 8 26.500C4 28 0 25 1 18Z" fill="url(#pt)" stroke="#6ea3c8" strokeWidth="0.800" />
    <circle cx="15" cy="21" r="2" fill="#d8dadf" stroke="#7aa8c6" strokeWidth="0.700" /><circle cx="7" cy="19" r="2.700" fill="#e23b2e" /><circle cx="12" cy="13.500" r="2.800" fill="#5fbf3f" /><circle cx="19" cy="11" r="3" fill="#f5b228" />
    <path d="M29 9L31.500 10.500L20 34L17.500 35L18 31Z" fill="#e8832d" /><path d="M27 3C29 0 33 1 36 4C34 6 33 10 30 9C28 8 29 5 27 3Z" fill="#b98d5e" />
  </svg>
);

const TaskItem = ({ label, children, open, active }) => (
  <button aria-label={label} className={`relative flex w-[75px] items-center justify-center border-x ${active ? "border-transparent bg-[#efeff3] bg-clip-padding" : "border-transparent"}`}>
    {children}
    {open && <span className={`absolute bottom-0 h-[3px] bg-[#0099bc] ${active ? "inset-x-0" : "inset-x-[6px]"}`} />}
  </button>
);

function Taskbar() {
  return (
    <div className="flex h-[60px] shrink-0 bg-[linear-gradient(90deg,#d6d6d6_0%,#d9d9dd_28%,#d9d9df_32%,#e0d6d2_44%,#dad7d5_58%,#d9dae1_68%,#d9dce4_80%,#e0d9dc_90%,#dddbd9_100%)]">
      <button aria-label="시작" className="flex w-[72px] items-center justify-center">
        <Svg w={24} h={24}><path d="M0 3.500L10 2V11.400H0ZM11.200 1.800L24 0V11.400H11.200ZM0 12.600H10V22L0 20.500ZM11.200 12.600H24V24L11.200 22.200Z" fill="#000" /></Svg>
      </button>
      <label className="flex w-[516px] items-center border-2 border-[#cbcbcb] bg-white pl-4">
        <Svg w={25} h={25}><circle cx="16" cy="9" r="8" stroke="#111" strokeWidth="1.600" /><path d="M10.500 15L0.500 24.500" stroke="#111" strokeWidth="1.600" /></Svg>
        <input aria-label="작업 표시줄 검색" placeholder="검색하려면 여기에 입력하십시오." className="ml-[17px] min-w-0 flex-1 text-[25px] font-light outline-none placeholder:text-black" />
      </label>
      <div className="flex">
        <button aria-label="Cortana" className="flex w-[72px] items-center justify-center"><Svg w={24} h={24}><circle cx="12" cy="12" r="10" stroke="#000" strokeWidth="3" /></Svg></button>
        <button aria-label="작업 보기" className="flex w-[71px] items-center justify-center">
          <Svg w={25} h={24} shapeRendering="crispEdges"><path d="M1 0V4H16V0M1 7H16V17H1ZM1 24V20H16V24M23 0V6M23 12V24" stroke="#000" /><path d="M21 7H25V10H21Z" fill="#000" /></Svg>
        </button>
        <div className="ml-1 flex">
          <TaskItem label="Microsoft Edge"><Edge /></TaskItem>
          <TaskItem label="Jupyter"><Jupyter /></TaskItem>
          <TaskItem label="파일 탐색기" open><Folder /></TaskItem>
          <TaskItem label="Office"><Office /></TaskItem>
          <TaskItem label="Chrome" open><Chrome /></TaskItem>
          <TaskItem label="eBook 앱" open><EBook /></TaskItem>
          <TaskItem label="메모장" open><Notepad /></TaskItem>
          <TaskItem label="Tableau Public" open active>
            <span className="flex size-[34px] items-center justify-center border-r border-b border-[#bbb] bg-[#fafafa]"><TableauMark size={29} /></span>
          </TaskItem>
          <TaskItem label="그림판" open><Paint /></TaskItem>
        </div>
      </div>
      <div className="mr-[6px] ml-auto flex items-center border-r-2 border-[#b0b0b0]">
        <button aria-label="숨겨진 아이콘"><Svg w={18} h={10}><path d="M0.500 9.500L9 1L17.500 9.500" stroke="#111" strokeWidth="1.400" /></Svg></button>
        <button aria-label="OneDrive" className="ml-[15px]"><Svg w={25} h={17}><path d="M6 15.500C-1 15.500 0 7.500 5.500 7C8 -1 17 0 18.500 5.500C25 6 26 15.500 19.500 15.500Z" fill="#ddd" stroke="#111" strokeWidth="1.300" /><path d="M6 7C9 1 16 1 18.500 6L13 8L2 13C1 10 3 8 6 7Z" fill="#8f8f8f" /></Svg></button>
        <button aria-label="배터리" className="ml-3"><Svg w={24} h={13}><path d="M0.700 0.700H21.300V12.300H0.700ZM22.500 4.500V8.500" stroke="#000" strokeWidth="1.300" /><path d="M2.500 2.500H16V10.500H2.500Z" fill="#000" /></Svg></button>
        <button aria-label="네트워크" className="ml-4"><Svg w={19} h={19}><path d="M0.700 18.500C0.700 8 8 0.700 18.500 0.700M5 18.500C5 10.500 10.500 5 18.500 5" stroke="#999" strokeWidth="1.200" /><path d="M9.500 18.500C9.500 13 13 9.500 18.500 9.500M13.500 18.500C13.500 15.500 15.500 13.500 18.500 13.500" stroke="#333" strokeWidth="1.200" /><circle cx="17" cy="17" r="1.600" fill="#000" /></Svg></button>
        <button aria-label="볼륨" className="ml-[14px]"><Svg w={23} h={19}><path d="M1 6H4L9 1V18L4 13H1Z" stroke="#000" strokeWidth="1.300" /><path d="M12 7C13.500 8.500 13.500 10.500 12 12" stroke="#222" strokeWidth="1.300" /><path d="M15 4.500C18 7.500 18 11.500 15 14.500M18.500 2C23 6.500 23 12.500 18.500 17" stroke="#888" strokeWidth="1.300" /></Svg></button>
        <button className="ml-3 text-[23px] leading-none font-medium text-black">가</button>
        <button className="ml-[13px] w-[98px] text-center text-lg leading-[28px] font-light whitespace-nowrap text-black">오후 7:05<br />2021-05-12</button>
        <button aria-label="알림 1개" className="relative mr-[18px] ml-[26px] h-9 w-[37px]">
          <Svg w={24} h={24}><path d="M0 0H24V19H15L10 24V19H0Z" fill="#000" /><path d="M5 5.500H19M5 9.500H19M5 13.500H14" stroke="#ddd" strokeWidth="1.200" /></Svg>
          <span className="absolute right-0 bottom-0 flex size-[25px] items-center justify-center rounded-full border border-[#777] bg-[#cfcfcf] text-base font-semibold text-black">1</span>
        </button>
      </div>
    </div>
  );
}

export default function App() {
  return (
    <div className={`flex h-screen flex-col overflow-hidden bg-[#f5f5f5] leading-tight ${SANS}`}>
      <TitleBar />
      <MenuBar />
      <Toolbar />
      <div className="flex min-h-0 flex-1">
        <DataPane />
        <Cards />
        <View />
      </div>
      <SheetTabs />
      <StatusBar />
      <Taskbar />
    </div>
  );
}
